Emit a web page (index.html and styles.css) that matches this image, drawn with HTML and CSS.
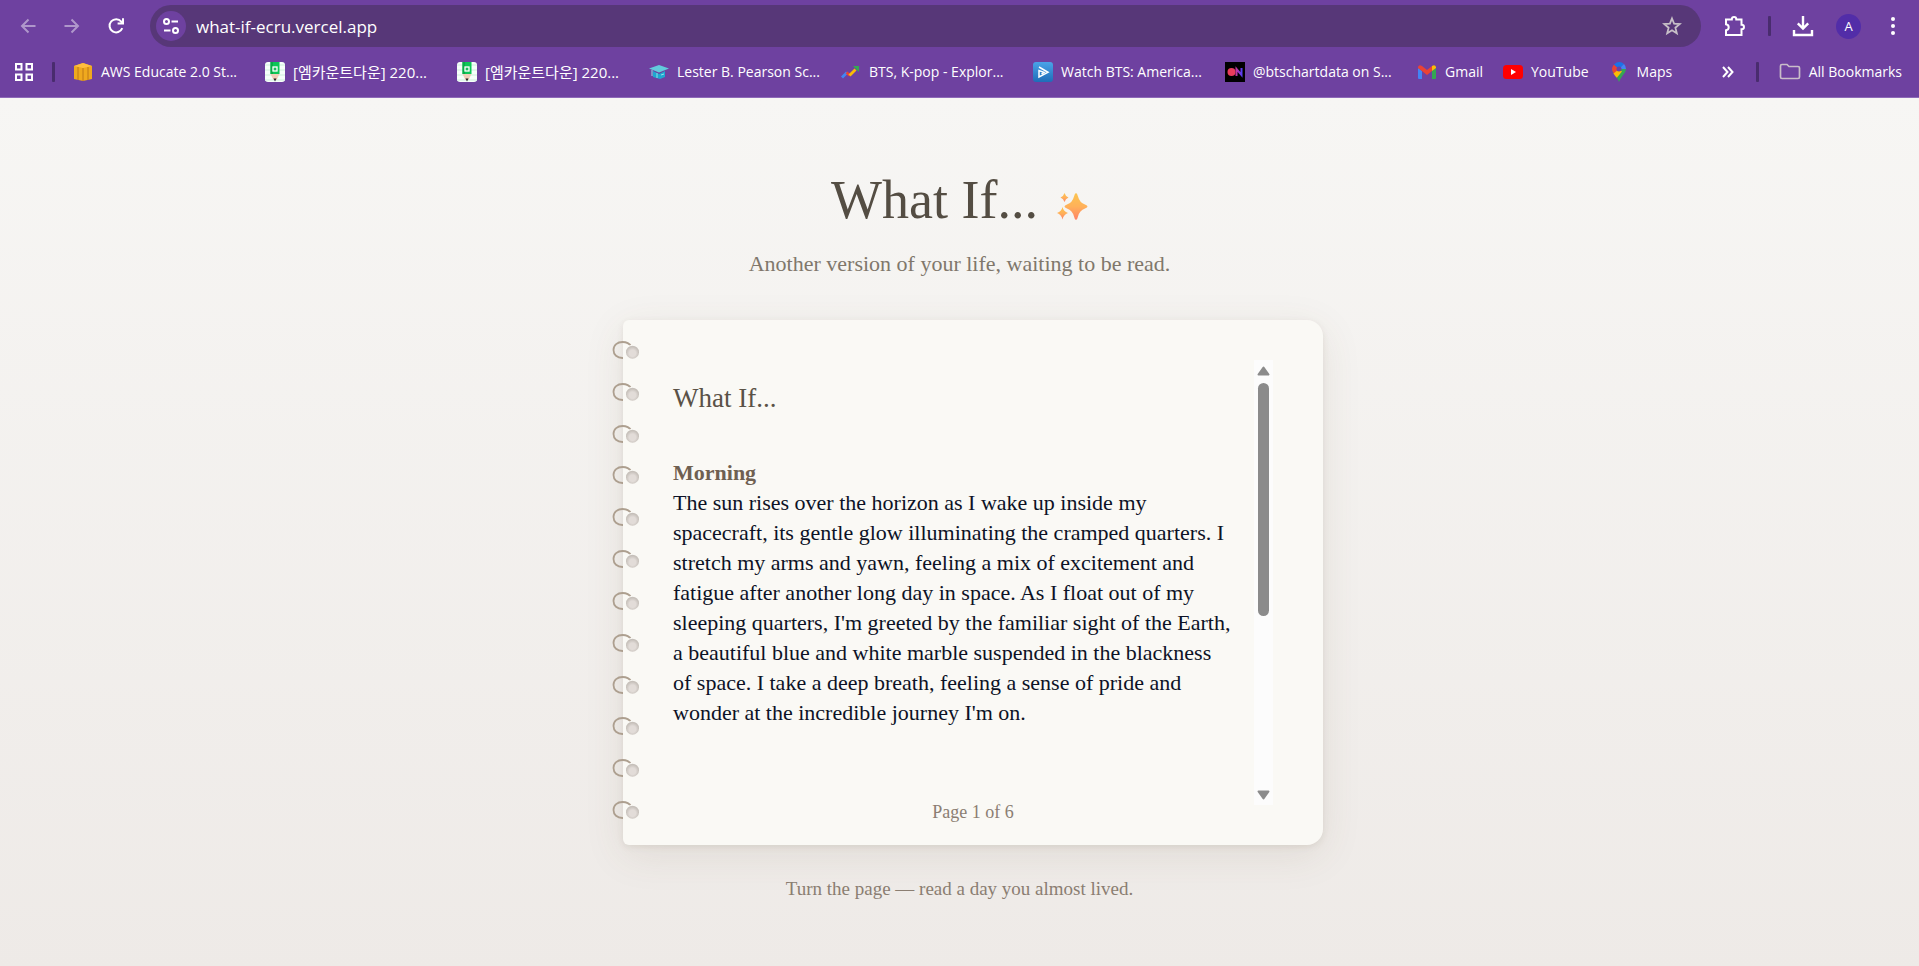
FILE: index.html
```html
<!DOCTYPE html>
<html lang="en">
<head>
<meta charset="utf-8">
<title>What If...</title>
<link rel="stylesheet" href="styles.css">
</head>
<body>
<svg class="defs" width="0" height="0" aria-hidden="true">
  <defs>
    <linearGradient id="spark" x1="0" y1="0" x2="0" y2="1"><stop offset="0" stop-color="#fcc550"/><stop offset="0.5" stop-color="#ffb15a"/><stop offset="1" stop-color="#ff8169"/></linearGradient>
    <linearGradient id="play" x1="0" y1="0" x2="0" y2="1"><stop offset="0" stop-color="#4aa3e8"/><stop offset="1" stop-color="#1f6db8"/></linearGradient>
    <linearGradient id="on" x1="0" y1="0" x2="1" y2="0"><stop offset="0" stop-color="#c035a0"/><stop offset="1" stop-color="#5a3cf0"/></linearGradient>
    <radialGradient id="hole" cy="0.58"><stop offset="0.5" stop-color="#e2dcd8"/><stop offset="1" stop-color="#c6c0ba"/></radialGradient>
    <symbol id="ring" viewBox="0 0 28 20">
      <path d="M12 18C6 18.200 2.500 14.500 2.500 10C2.500 5 6.500 2 11.500 2C15.500 2 18.500 3.500 20.200 6.500" fill="none" stroke="#ad9f8f" stroke-width="1.800"/>
      <circle cx="21.500" cy="12.200" r="7.500" fill="#faf9f5"/>
      <circle cx="21.500" cy="12.200" r="6.500" fill="url(#hole)"/>
    </symbol>
    <symbol id="pencil" viewBox="0 0 20 20">
      <rect width="20" height="20" rx="3" fill="#f6fffa"/><path d="M0 3h20M0 8h20M0 13h20M0 18h20" stroke="#dcf5e6" stroke-width="1.500"/>
      <path d="M5.500 0h9v12h-9z" fill="#0dc657"/><path d="M5.500 0h2.500v12H5.500z" fill="#08ac48"/>
      <rect x="8" y="5" width="4" height="4" fill="#17bd59" stroke="#fff" stroke-width="1.300"/>
      <path d="M5.500 12h9l-3 6h-3z" fill="#f2cdb9"/><path d="M8.500 16.500h3l-1.500 3z" fill="#222"/>
    </symbol>
  </defs>
</svg>

<header class="browser">
  <div class="toolbar">
    <nav class="nav" aria-label="Navigation">
      <button class="icon-btn dim" aria-label="Back"><svg width="16" height="16" viewBox="0 0 16 16"><path d="M15.500 8H2M8.500 1.500L2 8l6.500 6.500"/></svg></button>
      <button class="icon-btn dim" aria-label="Forward"><svg width="16" height="16" viewBox="0 0 16 16"><path d="M.5 8H14M7.500 1.500L14 8l-6.500 6.500"/></svg></button>
      <button class="icon-btn" aria-label="Reload"><svg width="18" height="18" viewBox="0 0 18 18"><path d="M15.300 11.200A6.600 6.600 0 1 1 14.300 4.600L16 6.500M16 1.200V6.600H10.600"/></svg></button>
    </nav>
    <div class="address">
      <button class="site-info" aria-label="Site information"><svg width="16" height="16" viewBox="0 0 16 16"><circle cx="3.500" cy="3.500" r="2.500"/><path d="M8.500 3.500H15M1 12.500h6.500"/><circle cx="12.500" cy="12.500" r="2.500"/></svg></button>
      <input class="url" type="text" aria-label="Address" value="what-if-ecru.vercel.app">
      <button class="icon-btn star" aria-label="Bookmark this page"><svg width="20" height="20" viewBox="0 0 20 20"><path d="M10 2.500l2.100 5.200 5.600.4-4.300 3.600 1.400 5.500L10 14.200l-4.800 3 1.400-5.500L2.300 8.100l5.600-.4z"/></svg></button>
    </div>
    <div class="actions">
      <button class="icon-btn" aria-label="Extensions"><svg width="22" height="22" viewBox="0 0 22 22"><path d="M2 4.500h5.800C7.800 1.200 12.300 1.200 12.300 4.500H17.500V9.700C20.800 9.700 20.800 14.200 17.500 14.200V20H2V15.300C5.600 14.800 5.600 9.800 2 9.300z"/></svg></button>
      <span class="divider"></span>
      <button class="icon-btn download" aria-label="Downloads"><svg width="22" height="22" viewBox="0 0 22 22"><path d="M11 1v12M5.800 8.300L11 13.500l5.200-5.200M2 15v5h18v-5"/></svg></button>
      <button class="avatar" aria-label="Profile A">A</button>
      <button class="icon-btn menu" aria-label="Menu"><svg width="6" height="20" viewBox="0 0 6 20"><circle cx="3" cy="3" r="2"/><circle cx="3" cy="10" r="2"/><circle cx="3" cy="17" r="2"/></svg></button>
    </div>
  </div>
  <nav class="bookmarks" aria-label="Bookmarks">
    <button class="icon-btn apps" aria-label="Apps"><svg width="20" height="20" viewBox="0 0 20 20"><path d="M2 2h5.500v5.500H2zM12.500 2H18v5.500h-5.500zM2 12.500h5.500V18H2zM12.500 12.500H18V18h-5.500z"/></svg></button>
    <span class="divider"></span>
    <div class="links">
      <a class="bm long" href="#"><svg width="20" height="20" viewBox="0 0 20 20"><path d="M1 4l9-3 9 3v13l-9 2-9-2z" fill="#efa91e"/><path d="M1 4l9-3 9 3-9 2z" fill="#ffbd3d"/><path d="M10 6v13M5 5v13M15 5v13" stroke="#be7916"/></svg>AWS Educate 2.0 St...</a>
      <a class="bm long" href="#" lang="ko"><svg width="20" height="20"><use href="#pencil"/></svg>[엠카운트다운] 220...</a>
      <a class="bm long" href="#" lang="ko"><svg width="20" height="20"><use href="#pencil"/></svg>[엠카운트다운] 220...</a>
      <a class="bm long" href="#"><svg width="20" height="20" viewBox="0 0 20 20"><path d="M4 9l6 3 6-3v6l-5 2-7-2z" fill="#20a6d0"/><path d="M0 6.500L10 3l10 3.500-10 4z" fill="#62cbdc"/><path d="M3 8v6M8 11v5M12 13l3-1" stroke="#8fe0e8"/></svg>Lester B. Pearson Sc...</a>
      <a class="bm long" href="#"><svg width="20" height="20" viewBox="0 0 20 20" fill="none" stroke-width="2.800"><path d="M1 15.500L6 10.500" stroke="#4285f4"/><path d="M5.500 10.500L9 13.500" stroke="#ea4335"/><path d="M8.500 13.500L14.500 7.500" stroke="#fbbc04"/><path d="M12 4h6v6z" fill="#34a853"/></svg>BTS, K-pop - Explor...</a>
      <a class="bm long" href="#"><svg width="20" height="20" viewBox="0 0 20 20"><rect width="20" height="20" rx="3" fill="url(#play)"/><path d="M6 5l9 5.300L6 15V8.500L11 10.300 8.500 11.800" fill="none" stroke="#fff" stroke-width="1.500"/></svg>Watch BTS: America...</a>
      <a class="bm long" href="#"><svg width="20" height="20" viewBox="0 0 20 20"><path d="M0 0h20v20H0z" fill="#000"/><circle cx="6.500" cy="10" r="4" fill="#e83c5c"/><path d="M11.500 14V7l5 6V6" fill="none" stroke="url(#on)" stroke-width="2"/></svg>@btschartdata on S...</a>
      <a class="bm" href="#"><svg width="20" height="20" viewBox="0 0 20 20"><path d="M1 6l4 3v8H2q-1 0-1-1z" fill="#4285f4"/><path d="M19 6l-4 3v8h3q1 0 1-1z" fill="#34a853"/><path d="M1 5q1-3 4-1l5 4 5-4v5l-5 4-5-4-4-3z" fill="#ea4335"/><path d="M15 4q3-2 4 1v1l-4 3z" fill="#fbbc04"/></svg>Gmail</a>
      <a class="bm" href="#"><svg width="20" height="20" viewBox="0 0 20 20"><rect y="3" width="20" height="14" rx="3.500" fill="#f00"/><path d="M8 7l5 3-5 3z" fill="#fff"/></svg>YouTube</a>
      <a class="bm" href="#"><svg width="20" height="20" viewBox="0 0 20 20"><path d="M3 7q0 3 3 6 3 4 4 7 1-3 4-7 3-3 3-6z" fill="#34a853"/><path d="M3 7q0-2 2-4.500L10 7 5 12Q3 9 3 7z" fill="#ea4335"/><path d="M5 2.500Q10-2 15 2L10 7z" fill="#1a73e8"/><path d="M15 2q2 2 2 5h-5l-2 0z" fill="#4285f4"/><path d="M10 7L4.500 11.500Q6 14 7.800 15.800L13 9.500z" fill="#fbbc04"/><circle cx="10" cy="7" r="2.500" fill="#6e41a0"/></svg>Maps</a>
    </div>
    <div class="bm-end">
      <button class="icon-btn" aria-label="More bookmarks"><svg width="12" height="12" viewBox="0 0 12 12"><path d="M1 1l4.500 5L1 11M6 1l4.500 5L6 11"/></svg></button>
      <span class="divider"></span>
      <a class="bm all" href="#"><svg width="22" height="18" viewBox="0 0 22 18"><path d="M1.500 3q0-1.500 1.500-1.500h5l2 2h9q1.500 0 1.500 1.500v9q0 1.500-1.500 1.500H3q-1.500 0-1.500-1.500z" fill="none" stroke="#c9bdc9" stroke-width="1.700"/></svg>All Bookmarks</a>
    </div>
  </nav>
</header>

<main class="page">
  <h1 class="title">What If... <svg width="32" height="30" viewBox="0 0 32 30" role="img" aria-label="sparkles"><g fill="url(#spark)"><path d="M20 1q1.200 0 2 3.500 1.500 6 7 8 2.500 1 2.500 2t-2.500 2q-5.500 2-7 8Q21.200 28 20 28t-2-3.500q-1.500-6-7-8-2.500-1-2.500-2t2.500-2q5.500-2 7-8Q18.800 1 20 1z"/><path d="M8.500 1q1 3.500 4 4.500-3 1-4 4.500-1-3.500-4-4.500 3-1 4-4.500z"/><path d="M6.500 15q1 4.500 5.500 6-4.500 1.500-5.500 6.500Q5.500 22.500 1 21q4.500-1.500 5.500-6z"/></g></svg></h1>
  <p class="subtitle">Another version of your life, waiting to be read.</p>

  <article class="notebook">
    <div class="rings" aria-hidden="true">
      <svg><use href="#ring"/></svg><svg><use href="#ring"/></svg><svg><use href="#ring"/></svg><svg><use href="#ring"/></svg>
      <svg><use href="#ring"/></svg><svg><use href="#ring"/></svg><svg><use href="#ring"/></svg><svg><use href="#ring"/></svg>
      <svg><use href="#ring"/></svg><svg><use href="#ring"/></svg><svg><use href="#ring"/></svg><svg><use href="#ring"/></svg>
    </div>
    <div class="sheet">
      <div class="story">
        <h2>What If...</h2>
        <h3>Morning</h3>
        <p>The sun rises over the horizon as I wake up inside my<br>spacecraft, its gentle glow illuminating the cramped quarters. I<br>stretch my arms and yawn, feeling a mix of excitement and<br>fatigue after another long day in space. As I float out of my<br>sleeping quarters, I'm greeted by the familiar sight of the Earth,<br>a beautiful blue and white marble suspended in the blackness<br>of space. I take a deep breath, feeling a sense of pride and<br>wonder at the incredible journey I'm on.</p>
      </div>
      <div class="scrollbar">
        <button aria-label="Scroll up"><svg width="13" height="10" viewBox="0 0 13 10"><path d="M6.500 1.500L11.500 8.500H1.500z"/></svg></button>
        <div class="track"><div class="thumb"></div></div>
        <button aria-label="Scroll down"><svg width="13" height="10" viewBox="0 0 13 10"><path d="M6.500 8.500L11.500 1.500H1.500z"/></svg></button>
      </div>
    </div>
    <p class="page-no">Page 1 of 6</p>
  </article>

  <p class="hint">Turn the page — read a day you almost lived.</p>
</main>
</body>
</html>
```
FILE: styles.css
```css
* { box-sizing: border-box; }
body {
  margin: 0;
  min-height: 100vh;
  display: flex;
  flex-direction: column;
  font-family: "Liberation Serif", serif;
}
h1, h2, h3, p { margin: 0; font-weight: 400; }
button { border: 0; padding: 0; background: none; color: inherit; font: inherit; display: flex; align-items: center; justify-content: center; }
svg { display: block; flex: none; }
.defs { position: absolute; }

/* Browser bars */
.browser {
  height: 98px;
  background: #6e41a0;
  border-bottom: 1px solid #8e69b8;
  color: #fff;
  font-family: "Open Sans", "Noto Sans CJK KR", sans-serif;
}
.toolbar { display: flex; padding: 5px 23px 0 18px; height: 47px; align-items: center; }
.icon-btn svg { fill: none; stroke: #fff; stroke-width: 2; }
.nav { display: flex; gap: 24px; width: 132px; }
.nav .icon-btn { width: 20px; height: 20px; }
.dim { opacity: 0.45; }
.address {
  flex: 1;
  display: flex;
  align-items: center;
  height: 42px;
  padding: 0 19px 0 6px;
  border-radius: 21px;
  background: #573778;
}
.site-info { width: 30px; height: 30px; border-radius: 50%; background: #6e41a0; }
.site-info svg { fill: none; stroke: #fff; stroke-width: 2; }
.url { flex: 1; margin-left: 10px; padding: 0; border: 0; outline: 0; background: none; color: #fff; font: 17px "Open Sans", sans-serif; }
.star svg { stroke: #c7bfc7; stroke-width: 1.8; }
.actions { display: flex; align-items: center; margin-left: 23px; }
.divider { width: 3px; height: 20px; border-radius: 1px; background: #492c6e; }
.actions .divider { margin: 0 21px 0 22px; }
.download svg { stroke-width: 2.4; }
.avatar { width: 25px; height: 25px; margin: 0 29px 0 22px; border-radius: 50%; background: #522da8; font-size: 13px; }
.menu svg { fill: #fff; stroke: none; }

.bookmarks { display: flex; align-items: center; height: 50px; padding: 0 17px 0 14px; }
.bookmarks > .divider { margin: 0 18px; }
.links { flex: 1; display: flex; min-width: 0; }
.bm { display: flex; align-items: center; gap: 8px; margin-right: 20px; color: #fff; font-size: 14px; line-height: 20px; text-decoration: none; white-space: nowrap; }
.bm:lang(ko) { font-size: 15px; }
.long { width: 192px; margin-right: 0; }
.bm-end { display: flex; align-items: center; }
.bm-end .divider { margin: 0 20px 0 22px; }
.all { margin: 0; }

/* Story page */
.page {
  flex: 1;
  display: flex;
  flex-direction: column;
  align-items: center;
  padding: 68px 20px;
  background: linear-gradient(#f7f6f4, #eeeae7);
}
.title { display: flex; align-items: flex-end; gap: 18px; color: #544d43; font-size: 54px; line-height: 68px; }
.title svg { margin-bottom: 12px; }
.subtitle { margin-top: 16px; color: #80776b; font-size: 22px; line-height: 28px; }
.notebook {
  position: relative;
  width: 100%;
  max-width: 700px;
  margin: 42px 0 0 27px;
  padding: 40px 50px 19px;
  border-radius: 6px 16px 16px 6px;
  background: #faf9f5;
  box-shadow: 0 10px 40px rgba(100, 75, 50, 0.1), 0 2px 6px rgba(100, 75, 50, 0.1);
}
.rings { position: absolute; top: 20px; left: -12px; height: 480px; display: flex; flex-direction: column; justify-content: space-between; }
.rings svg { width: 28px; height: 20px; }
.sheet { display: flex; height: 445px; }
.story { flex: 1; padding-top: 19px; white-space: nowrap; color: #0d1226; font-size: 22px; line-height: 30px; }
.story h2 { color: #5a5247; font-size: 27px; line-height: 38px; }
.story h3 { margin-top: 41px; color: #6f6051; font-size: 22px; font-weight: 700; line-height: 30px; }
.scrollbar { width: 19px; display: flex; flex-direction: column; background: #fcfcfc; padding: 5px 0 4px; }
.scrollbar button { height: 12px; }
.scrollbar svg { fill: #8b8b8b; stroke: #8b8b8b; stroke-width: 2; stroke-linejoin: round; }
.track { flex: 1; display: flex; justify-content: center; padding: 6px 0; }
.thumb { width: 11px; height: 233px; border-radius: 6px; background: #8b8b8b; }
.page-no { margin-top: -7px; color: #8b7e72; font-size: 18px; line-height: 28px; text-align: center; }
.hint { margin-top: 30px; color: #8b7e72; font-size: 19px; line-height: 28px; }
```
